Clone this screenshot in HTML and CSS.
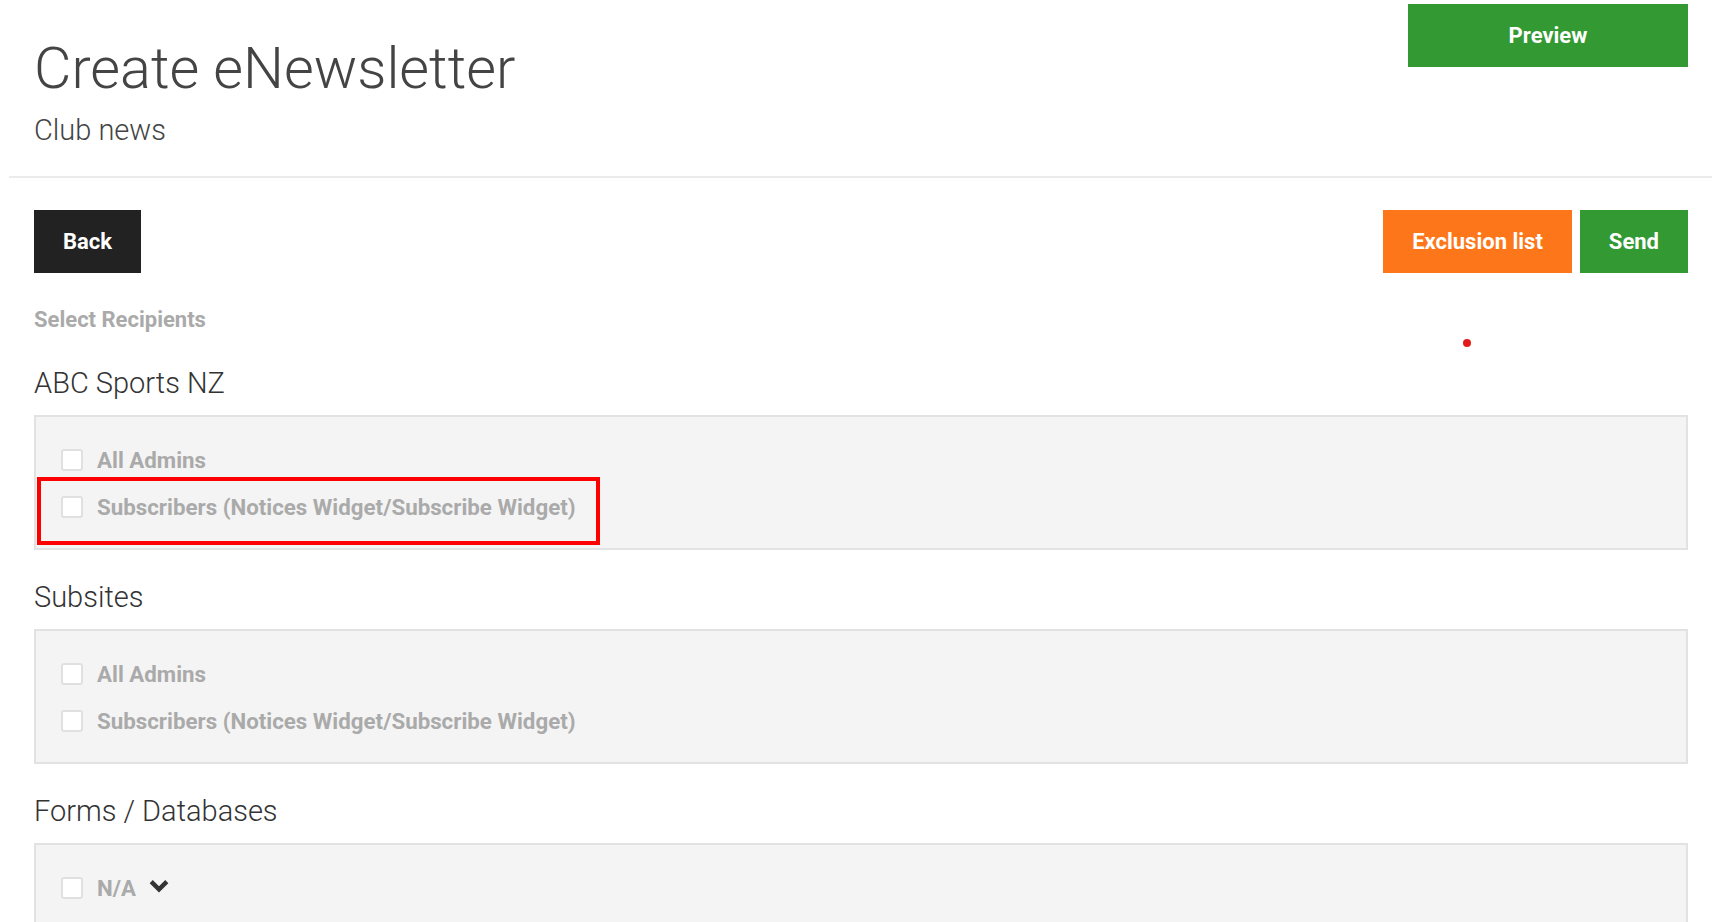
FILE: index.html
```html
<!DOCTYPE html>
<html lang="en">
<head>
<meta charset="utf-8">
<title>Create eNewsletter</title>
<link rel="stylesheet" href="styles.css">
</head>
<body>
<div class="page">
  <header class="header">
    <div class="titles">
      <h1 class="title">Create eNewsletter</h1>
      <p class="subtitle">Club news</p>
    </div>
    <button class="btn btn-green btn-preview">Preview</button>
  </header>

  <main class="content">
    <div class="toolbar">
      <button class="btn btn-dark">Back</button>
      <div class="toolbar-right">
        <button class="btn btn-orange">Exclusion list</button>
        <button class="btn btn-green">Send</button>
      </div>
    </div>

    <p class="section-label">Select Recipients</p>
    <span class="red-dot"></span>

    <section class="group">
      <h2 class="group-title">ABC Sports NZ</h2>
      <div class="panel">
        <label class="row"><span class="check"></span><span class="row-text">All Admins</span></label>
        <label class="row"><span class="check"></span><span class="row-text">Subscribers (Notices Widget/Subscribe Widget)</span></label>
        <span class="highlight"></span>
      </div>
    </section>

    <section class="group">
      <h2 class="group-title">Subsites</h2>
      <div class="panel">
        <label class="row"><span class="check"></span><span class="row-text">All Admins</span></label>
        <label class="row"><span class="check"></span><span class="row-text">Subscribers (Notices Widget/Subscribe Widget)</span></label>
      </div>
    </section>

    <section class="group">
      <h2 class="group-title">Forms / Databases</h2>
      <div class="panel panel-tall">
        <label class="row"><span class="check"></span><span class="row-text">N/A</span>
          <svg class="chevron" width="20" height="14" viewBox="0 0 20 14"><polyline points="2.2,2.6 10,10.4 17.8,2.6" fill="none" stroke="#333" stroke-width="4.4" stroke-linecap="butt" stroke-linejoin="miter"/></svg>
        </label>
      </div>
    </section>
  </main>
</div>
</body>
</html>
```

FILE: styles.css
```css
* { box-sizing: border-box; }

html, body {
  margin: 0;
  padding: 0;
  background: #fff;
  font-family: Roboto, "Liberation Sans", Arial, sans-serif;
  overflow: hidden;
}

.page {
  margin: 0 14px 0 9px;
}

.header {
  display: flex;
  justify-content: space-between;
  align-items: flex-start;
  padding: 4px 24px 0 25px;
  height: 178px;
  border-bottom: 2px solid #ebebeb;
}

.titles {
  padding-top: 31px;
}

.title {
  margin: 0;
  font-weight: 300;
  font-size: 57.6px;
  line-height: 68px;
  color: #444;
}

.subtitle {
  margin: 10px 0 0;
  font-weight: 300;
  font-size: 29px;
  line-height: 34px;
  color: #444;
}

.btn {
  border: 0;
  margin: 0;
  height: 63px;
  padding: 0 29px;
  font-family: Roboto, "Liberation Sans", Arial, sans-serif;
  font-weight: 700;
  font-size: 22px;
  color: #fff;
  cursor: pointer;
  display: inline-flex;
  align-items: center;
  justify-content: center;
}

.btn-green { background: #339933; }
.btn-orange { background: #fd7619; }
.btn-dark { background: #222; }

.btn-preview {
  width: 280px;
}

.content {
  position: relative;
  padding: 32px 24px 0 25px;
}

.toolbar {
  display: flex;
  justify-content: space-between;
  align-items: center;
}

.toolbar-right {
  display: flex;
  gap: 8px;
}

.section-label {
  margin: 34px 0 0;
  font-weight: 700;
  font-size: 22px;
  line-height: 26px;
  color: #aaa;
}

.red-dot {
  position: absolute;
  left: 1454px;
  top: 161px;
  width: 8px;
  height: 8px;
  border-radius: 50%;
  background: #e21b1b;
}

.group {
  margin-top: 30px;
}

.group:first-of-type {
  margin-top: 33px;
}

.group-title {
  margin: 0 0 15px;
  font-weight: 300;
  font-size: 29px;
  line-height: 34px;
  color: #333;
}

.panel {
  position: relative;
  background: #f4f4f4;
  border: 2px solid #e2e2e2;
  padding: 19px 25px 18px;
}

.panel-tall {
  min-height: 135px;
}

.row {
  display: flex;
  align-items: center;
  height: 47px;
}

.check {
  width: 22px;
  height: 22px;
  background: #fff;
  border: 2px solid #e0e0e0;
  border-radius: 3px;
  flex: none;
  margin-right: 14px;
}

.row-text {
  font-weight: 700;
  font-size: 22.3px;
  color: #aaa;
}

.chevron {
  margin-left: 13px;
  margin-top: -4px;
}

.highlight {
  position: absolute;
  left: 1px;
  top: 60px;
  width: 563px;
  height: 68px;
  border: 4px solid #ff0000;
}
```
